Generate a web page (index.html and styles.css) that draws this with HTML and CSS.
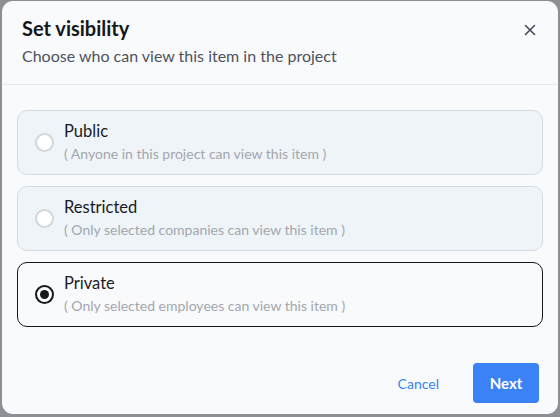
FILE: index.html
```html
<!DOCTYPE html>
<html lang="en">
<head>
    <meta charset="UTF-8">
    <meta name="viewport" content="width=device-width, initial-scale=1.0">
    <title>Set visibility</title>
    <link rel="stylesheet" href="styles.css">
</head>
<body>
    <div class="modal">
        <div class="modal-header">
            <div class="header-text">
                <h2 class="modal-title">Set visibility</h2>
                <p class="modal-subtitle">Choose who can view this item in the project</p>
            </div>
            <button class="close-btn" aria-label="Close">
                <svg width="12" height="12" viewBox="0 0 12 12">
                    <path d="M1.5 1.5 L10.5 10.5 M10.5 1.5 L1.5 10.5" stroke="#434a5a" stroke-width="1.6" stroke-linecap="round"/>
                </svg>
            </button>
        </div>

        <div class="modal-body">
            <label class="option">
                <input type="radio" name="visibility" value="public">
                <span class="radio"></span>
                <span class="option-text">
                    <span class="option-title">Public</span>
                    <span class="option-desc">( Anyone in this project can view this item )</span>
                </span>
            </label>
            <label class="option">
                <input type="radio" name="visibility" value="restricted">
                <span class="radio"></span>
                <span class="option-text">
                    <span class="option-title">Restricted</span>
                    <span class="option-desc">( Only selected companies can view this item )</span>
                </span>
            </label>
            <label class="option">
                <input type="radio" name="visibility" value="private" checked>
                <span class="radio"></span>
                <span class="option-text">
                    <span class="option-title">Private</span>
                    <span class="option-desc">( Only selected employees can view this item )</span>
                </span>
            </label>
        </div>

        <div class="modal-footer">
            <button class="btn-link">Cancel</button>
            <button class="btn-primary">Next</button>
        </div>
    </div>
</body>
</html>
```

FILE: styles.css
```css
html, body {
    height: 100%;
}
body {
    margin: 0;
    padding: 1px 2px 3px 2px;
    box-sizing: border-box;
    background-color: #8c8f94;
    font-family: Lato, "Open Sans", sans-serif;
    color: #1c1c1e;
}
.modal {
    height: 100%;
    box-sizing: border-box;
    background: #f9fafc;
    border-radius: 11px;
    display: flex;
    flex-direction: column;
}
.modal-header {
    display: flex;
    justify-content: space-between;
    align-items: flex-start;
    padding: 14px 22px 18px 20px;
    border-bottom: 1px solid #e4e7eb;
}
.modal-title {
    margin: 0;
    font-size: 20px;
    font-weight: 700;
    line-height: 26px;
    color: #16171a;
}
.modal-subtitle {
    margin: 5px 0 0;
    font-size: 16px;
    line-height: 20px;
    color: #4d5360;
}
.close-btn {
    background: none;
    border: none;
    padding: 0;
    margin-top: 9px;
    width: 12px;
    height: 12px;
    cursor: pointer;
    display: flex;
}
.modal-body {
    display: flex;
    flex-direction: column;
    gap: 11px;
    padding: 25px 15px 0 15px;
}
.option {
    display: flex;
    align-items: center;
    gap: 10px;
    height: 65px;
    box-sizing: border-box;
    padding: 0 16px 0 17px;
    border: 1px solid #d2dbe3;
    border-radius: 10px;
    background: #eef4f8;
    cursor: pointer;
}
.option:has(input:checked) {
    background: #f9fafc;
    border-color: #17181b;
}
.option input {
    display: none;
}
.radio {
    width: 19px;
    height: 19px;
    box-sizing: border-box;
    border-radius: 50%;
    border: 2px solid #d3d6da;
    background: #fff;
    flex-shrink: 0;
    position: relative;
}
.option input:checked + .radio {
    border: 2px solid #17181b;
}
.option input:checked + .radio::after {
    content: "";
    position: absolute;
    top: 3px;
    left: 3px;
    width: 9px;
    height: 9px;
    border-radius: 50%;
    background: #17181b;
}
.option-text {
    display: flex;
    flex-direction: column;
    gap: 4px;
    margin-top: -3px;
}
.option-title {
    font-size: 16.5px;
    line-height: 20px;
    color: #1a1b1e;
}
.option-desc {
    font-size: 14px;
    line-height: 17px;
    color: #a3a7ad;
}
.modal-footer {
    margin-top: auto;
    display: flex;
    justify-content: flex-end;
    align-items: center;
    gap: 34px;
    padding: 0 19px 11px 0;
}
.btn-link {
    background: none;
    border: none;
    padding: 0;
    font-family: inherit;
    font-size: 14px;
    color: #3b82f6;
    cursor: pointer;
}
.btn-primary {
    background: #3b82f6;
    border: none;
    border-radius: 4px;
    width: 66px;
    height: 40px;
    font-family: inherit;
    font-size: 15px;
    font-weight: 700;
    color: #fff;
    cursor: pointer;
}
```
